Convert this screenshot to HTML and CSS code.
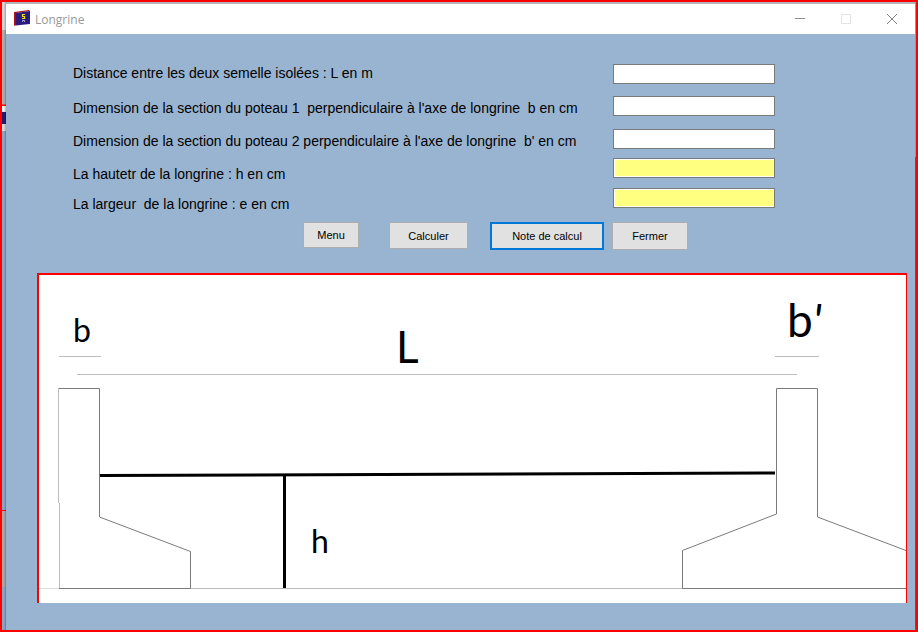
FILE: index.html
```html
<!DOCTYPE html>
<html lang="fr">
<head>
<meta charset="utf-8">
<title>Longrine</title>
<link rel="stylesheet" href="styles.css">
</head>
<body>
<div class="desktop">
  <main class="window">
    <header class="titlebar">
      <svg class="app-icon" width="16" height="16" viewBox="0 0 16 16" aria-hidden="true">
        <path d="M0 2 L15 0 L16 1 L2 3 V15 L0 16 Z" fill="#b3141a"/>
        <path d="M1.500 3 L16 1 V14 L1.500 15.500 Z" fill="#2a1c7c"/>
        <path d="M11 4.500 H8.500 V6.500 H10.500 V8.500 H8" fill="none" stroke="#f2e600" stroke-width="1.200"/>
        <path d="M8.500 12 V10.500 H10.500 V12" fill="none" stroke="#a9a4d8"/>
      </svg>
      <h1 class="title">Longrine</h1>
      <div class="controls">
        <button type="button" class="control" aria-label="Réduire"><svg width="10" height="10" viewBox="0 0 10 10"><path d="M0 4.500H10" stroke="#8c8c8c"/></svg></button>
        <button type="button" class="control" aria-label="Agrandir" disabled><svg width="10" height="10" viewBox="0 0 10 10"><path d="M.5 .5H9.500V9.500H.5Z" fill="none" stroke="#e3e3e3"/></svg></button>
        <button type="button" class="control" aria-label="Fermer la fenêtre"><svg width="10" height="10" viewBox="0 0 10 10"><path d="M0 0L10 10M10 0L0 10" stroke="#808080"/></svg></button>
      </div>
    </header>
    <form class="form">
      <div class="fields">
        <div class="labels">
          <label for="distance">Distance entre les deux semelle isolées : L en m</label>
          <label for="poteau1">Dimension de la section du poteau 1  perpendiculaire à l'axe de longrine  b en cm</label>
          <label for="poteau2">Dimension de la section du poteau 2 perpendiculaire à l'axe de longrine  b' en cm</label>
          <label for="hauteur">La hautetr de la longrine : h en cm</label>
          <label for="largeur">La largeur  de la longrine : e en cm</label>
        </div>
        <div class="inputs">
          <input id="distance" type="text">
          <input id="poteau1" type="text">
          <input id="poteau2" type="text">
          <input id="hauteur" class="result" type="text" readonly>
          <input id="largeur" class="result" type="text" readonly>
        </div>
      </div>
      <div class="actions">
        <button type="button" class="btn menu">Menu</button>
        <button type="button" class="btn calculer">Calculer</button>
        <button type="button" class="btn note">Note de calcul</button>
        <button type="button" class="btn fermer">Fermer</button>
      </div>
    </form>
    <figure class="panel">
      <svg class="drawing" viewBox="0 0 867 328" role="img" aria-label="Schéma de la longrine entre deux semelles">
        <g fill="none" stroke="#bdbdbd">
          <path d="M20 81.500H62M736 81.500H780M38 99.500H758M20 313.500H644"/>
          <path d="M0 313.500H20" stroke="#dcdcdc"/>
          <path d="M19.500 113V228M20.500 228V313"/>
        </g>
        <g fill="none" stroke="#7b7b7b">
          <path d="M20 113.500H60.500V242L151.500 276.500V313.500H20"/>
          <path d="M867 313.500H643.500V275.500L737.500 239V113.500H778.500V242L867 275.500"/>
        </g>
        <path d="M61 200.500L736 198" stroke="#000" stroke-width="3"/>
        <path d="M245.500 200V313" stroke="#000" stroke-width="3"/>
        <g>
          <text class="mark small" x="34" y="67">b</text>
          <text class="mark medium" x="357" y="88">L</text>
          <text class="mark large" x="748" y="62">b<tspan class="prime">'</tspan></text>
          <text class="mark small" x="272" y="278">h</text>
        </g>
      </svg>
    </figure>
  </main>
</div>
</body>
</html>
```
FILE: styles.css
```css
* {
  box-sizing: border-box;
}

body {
  margin: 0;
  font-family: "Liberation Sans", Arial, sans-serif;
}

/* Edge of the desktop left visible round the window */
.desktop {
  display: flex;
  min-height: 100vh;
  padding: 2px 1px 0 4px;
  border: 2px solid #f00;
  background:
    linear-gradient(to right, transparent 2px, #0004) left / 4px 100% no-repeat,
    linear-gradient(#d6d6d6 0 28px, #acacac 28px 102px, #f00 103px 104px, #f4f4f4 104px 110px, #241c70 110px 122px, #dcdcdc 122px 129px, #8ba6c4 129px 508px, #f00 508px 509px, #a8a8a8 509px 585px, #8ba6c4 585px) left / 4px 100% no-repeat,
    linear-gradient(#999 0 155px, #3c5f96 155px) right / 1px 100% no-repeat,
    #b4b4b4;
}

.window {
  display: flex;
  flex: 1;
  flex-direction: column;
  background: #99b4d1;
}

.titlebar {
  display: flex;
  align-items: center;
  height: 30px;
  padding-left: 8px;
  background: #fff;
}

.app-icon {
  margin-bottom: 2px;
}

.title {
  flex: 1;
  margin: 0 0 0 5px;
  color: #999;
  font: 12px "Open Sans", sans-serif;
}

.controls {
  display: flex;
}

.control {
  display: grid;
  place-items: center;
  width: 46px;
  height: 28px;
  padding: 0;
  border: 0;
  background: none;
}

.fields {
  display: grid;
  grid-template-columns: 540px 162px;
  padding: 27px 0 0 67px;
}

.labels {
  display: grid;
  grid-template-rows: 35px 33px 33px 30px 30px;
}

.labels label {
  color: #000;
  font-size: 14px;
  line-height: 24px;
  white-space: pre;
}

.inputs {
  display: grid;
  grid-template-rows: 32px 33px 29px 30px 30px;
  padding-top: 3px;
}

.inputs input {
  width: 162px;
  height: 20px;
  padding: 1px;
  border: 1px solid #7a7a7a;
  background: #fff;
}

.inputs .result {
  background: #ffff80;
  box-shadow: inset 0 0 0 1px #fff;
}

.actions {
  display: flex;
  align-items: flex-start;
  height: 28px;
  margin-left: 297px;
}

.btn {
  height: 28px;
  padding: 0;
  border: 1px solid #adadad;
  background: #e1e1e1;
  color: #000;
  font: 11px "Liberation Sans", Arial, sans-serif;
}

.menu {
  width: 56px;
  height: 26px;
  margin-right: 30px;
}

.calculer {
  width: 79px;
  height: 27px;
  margin-right: 22px;
}

.note {
  width: 114px;
  border: 2px solid #0078d7;
  margin-right: 8px;
}

.fermer {
  width: 76px;
}

.panel {
  margin: 23px 8px 27px 31px;
  border: solid #f00;
  border-width: 2px 1px 0 2px;
  background: #fff;
}

.drawing {
  display: block;
  width: 100%;
}

.mark {
  font-family: Lato, sans-serif;
}

.small {
  font-size: 32px;
}

.medium {
  font-size: 44px;
}

.large {
  font-size: 46px;
}

.prime {
  font-style: italic;
}
```
